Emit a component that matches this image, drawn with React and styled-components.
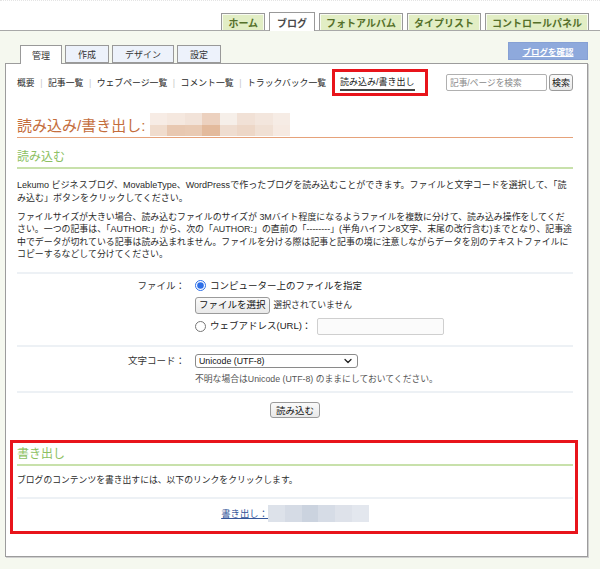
import React from 'react';
import styled, { createGlobalStyle } from 'styled-components';

const GlobalStyle = createGlobalStyle`
  html, body { margin: 0; padding: 0; background: #f5f8ef; }
  body { font-family: "Liberation Sans", "Noto Sans CJK JP", sans-serif; color: #333; }
  * { box-sizing: border-box; }
`;

const Page = styled.div`
  width: 600px;
  min-height: 569px;
  background: #f5f8ef;
`;

const TopBar = styled.div`
  height: 31px;
  background: #fff;
  border-top: 1px dotted #e4e4e4;
  border-bottom: 1px solid #a8a8a8;
  display: flex;
  justify-content: flex-end;
  align-items: flex-end;
  gap: 4px;
  padding-right: 11px;
`;

const TopTab = styled.div`
  height: ${p => (p.$active ? 19 : 17)}px;
  margin-bottom: ${p => (p.$active ? -1 : 0)}px;
  padding: 1px ${p => (p.$active ? 7 : 6)}px 0;
  display: flex;
  align-items: center;
  font-size: 10px;
  font-weight: bold;
  background: ${p => (p.$active ? '#fff' : '#e2eec5')};
  color: ${p => (p.$active ? '#4a4a4a' : '#55702a')};
  border: 1px solid #999;
  border-bottom: none;
  box-shadow: inset 1px 1px 0 rgba(255, 255, 255, 0.75), inset -1px 0 0 rgba(255, 255, 255, 0.75);
  white-space: nowrap;
`;

const Main = styled.div`
  padding: 0 12px 14px 5px;
`;

const SubBar = styled.div`
  height: 32px;
  display: flex;
  justify-content: space-between;
  align-items: flex-end;
  padding-left: 15px;
`;

const SubTabs = styled.div`
  display: flex;
  align-items: flex-end;
  gap: 3px;
`;

const SubTab = styled.div`
  position: relative;
  z-index: 1;
  height: ${p => (p.$active ? 19 : 18)}px;
  margin-bottom: ${p => (p.$active ? -1 : 0)}px;
  padding: 0 ${p => (p.$active ? 11 : 12)}px;
  display: flex;
  align-items: center;
  font-size: 9px;
  color: #333;
  background: ${p => (p.$active ? '#fff' : '#edf2fb')};
  border: 1px solid #999;
  border-bottom: ${p => (p.$active ? 'none' : '1px solid #999')};
  white-space: nowrap;
`;

const ViewBlogButton = styled.a`
  width: 80px;
  height: 18px;
  margin-bottom: 3px;
  display: flex;
  align-items: center;
  justify-content: center;
  background: #8ea9dc;
  border: 1px solid #86a0d4;
  color: #fff;
  font-size: 8.5px;
  font-weight: bold;
  text-decoration: underline;
`;

const Panel = styled.div`
  background: #fff;
  border: 1px solid #9c9c9c;
  box-shadow: 1px 1px 0 #cfcfcf;
  padding: 5px 14px 22px 11px;
`;

const NavRow = styled.div`
  display: flex;
  align-items: center;
  justify-content: space-between;
  height: 27px;
`;

const NavLinks = styled.div`
  display: flex;
  align-items: center;
  font-size: 8.85px;
  color: #2a2a2a;
`;

const NavLink = styled.span`
  white-space: nowrap;
`;

const NavSep = styled.span`
  color: #c8c8c8;
  margin: 0 5.5px;
`;

const ActiveNav = styled.span`
  margin-left: 6px;
  border: 3px solid #e8141b;
  padding: 3px 10px 2px 5px;
  display: flex;
  align-items: center;
  height: 27px;
`;

const ActiveNavText = styled.span`
  font-size: 9px;
  color: #222;
  line-height: 13px;
  border-bottom: 2px solid #444;
  white-space: nowrap;
`;

const SearchForm = styled.div`
  display: flex;
  align-items: center;
  gap: 2px;
`;

const SearchInput = styled.div`
  width: 101px;
  height: 17px;
  border: 1px solid #b0b0b0;
  border-radius: 2px;
  font-size: 8.7px;
  color: #8a8a8a;
  display: flex;
  align-items: center;
  padding-left: 3px;
  background: #fff;
`;

const Btn = styled.span`
  display: inline-flex;
  align-items: center;
  justify-content: center;
  height: ${p => p.$h || 17}px;
  padding: 0 ${p => p.$px || 3}px;
  border: 1px solid #9a9a9a;
  border-radius: 3px;
  background: linear-gradient(#fafafa, #e9e9e9);
  font-size: ${p => p.$fs || 9}px;
  color: #111;
  white-space: nowrap;
`;

const PageTitle = styled.h1`
  margin: 17px 0 0;
  display: flex;
  align-items: flex-end;
  border-bottom: 1.5px solid #e6a27a;
  font-size: 15px;
  font-weight: normal;
  color: #c46d3c;
  line-height: 20px;
  padding-bottom: 1px;
`;

const Mosaic = styled.span`
  display: inline-grid;
  grid-template-columns: repeat(${p => p.$cols}, ${p => p.$cw}px);
  grid-auto-rows: ${p => p.$ch}px;
  vertical-align: middle;
`;

const Cell = styled.span`
  background: ${p => p.$c};
`;

const SectionTitle = styled.h2`
  margin: ${p => p.$mt || 11}px 0 0;
  font-size: 12px;
  font-weight: normal;
  color: #8cbf62;
  line-height: 16px;
  padding-bottom: 2px;
  border-bottom: 2px solid #c8e1ab;
`;

const Para = styled.p`
  margin: ${p => p.$mt || 0}px 0 0;
  font-size: ${p => p.$fs || 9.02}px;
  line-height: 12.5px;
  color: #2a2a2a;
`;

const FormTable = styled.div`
  margin-top: 11px;
`;

const FormRow = styled.div`
  display: grid;
  grid-template-columns: 168px 1fr;
  column-gap: 10px;
  border-top: 2px solid #edf1f5;
  padding: ${p => p.$pad};
`;

const FormLabel = styled.div`
  text-align: right;
  font-size: 9.5px;
  line-height: 14px;
  color: #333;
`;

const FieldCol = styled.div`
  display: flex;
  flex-direction: column;
  align-items: flex-start;
  gap: ${p => p.$gap || 4}px;
`;

const Line = styled.div`
  display: flex;
  align-items: center;
  gap: 4px;
  font-size: 9.5px;
  line-height: 14px;
  color: #222;
`;

const Radio = styled.input.attrs({ type: 'radio' })`
  width: 11px;
  height: 11px;
  margin: 0;
  accent-color: #2d6fe8;
`;

const Muted = styled.span`
  font-size: 8.8px;
  color: #333;
`;

const UrlInput = styled.div`
  width: 127px;
  height: 17px;
  border: 1px solid #cfcfcf;
  border-radius: 2px;
  background: #fbfbfb;
  margin-left: 2px;
`;

const SelectBox = styled.div`
  width: 163px;
  height: 14px;
  border: 1px solid #8a8a8a;
  border-radius: 3px;
  background: #fff;
  display: flex;
  align-items: center;
  justify-content: space-between;
  padding: 0 5px 0 3px;
  font-size: 8.8px;
  color: #111;
`;

const Help = styled.div`
  font-size: 8.8px;
  line-height: 12px;
  color: #555;
`;

const CenterRow = styled.div`
  display: flex;
  justify-content: center;
  align-items: center;
  margin-top: ${p => p.$mt || 0}px;
  padding: ${p => p.$pad};
  border-top: ${p => (p.$line ? '2px solid #edf1f5' : 'none')};
`;

const ExportBox = styled.section`
  margin: 22px -5px 0 -7px;
  border: 3px solid #e8141b;
  padding: 0 2px 9px 4px;
`;

const ExportText = styled.p`
  margin: 8px 0 0;
  font-size: 8.8px;
  line-height: 12px;
  color: #2a2a2a;
`;

const ExportLink = styled.a`
  font-size: 9.4px;
  color: #35569a;
  text-decoration: underline;
  white-space: nowrap;
`;

const topTabs = ['ホーム', 'ブログ', 'フォトアルバム', 'タイプリスト', 'コントロールパネル'];
const subTabs = ['管理', '作成', 'デザイン', '設定'];
const navLinks = ['概要', '記事一覧', 'ウェブページ一覧', 'コメント一覧', 'トラックバック一覧'];

const titleMosaic = [
  '#f7ece5', '#f5e8df', '#f2e3d9', '#ecd1bf', '#f6efe9', '#f1e1d6', '#f3e6dd', '#f6ece5',
  '#f0dccd', '#e8c8b1', '#e9cab3', '#e3ba9c', '#efddd0', '#edd7c7', '#f0e0d4', '#f6eae2',
];
const exportMosaic = ['#dde2ea', '#d5dbe5', '#cbd3df', '#d6dce6', '#dee2ea', '#e3e7ee'];

export default function App() {
  return (
    <Page>
      <GlobalStyle />
      <TopBar>
        {topTabs.map(t => (
          <TopTab key={t} $active={t === 'ブログ'}>{t}</TopTab>
        ))}
      </TopBar>
      <Main>
        <SubBar>
          <SubTabs>
            {subTabs.map(t => (
              <SubTab key={t} $active={t === '管理'}>{t}</SubTab>
            ))}
          </SubTabs>
          <ViewBlogButton>ブログを確認</ViewBlogButton>
        </SubBar>
        <Panel>
          <NavRow>
            <NavLinks>
              {navLinks.map((l, i) => (
                <React.Fragment key={l}>
                  {i > 0 && <NavSep>|</NavSep>}
                  <NavLink>{l}</NavLink>
                </React.Fragment>
              ))}
              <ActiveNav>
                <ActiveNavText>読み込み/書き出し</ActiveNavText>
              </ActiveNav>
            </NavLinks>
            <SearchForm>
              <SearchInput>記事/ページを検索</SearchInput>
              <Btn $h={17} $px={2}>検索</Btn>
            </SearchForm>
          </NavRow>

          <PageTitle>
            読み込み/書き出し:&nbsp;
            <Mosaic $cols={8} $cw={17.6} $ch={11.5}>
              {titleMosaic.map((c, i) => <Cell key={i} $c={c} />)}
            </Mosaic>
          </PageTitle>

          <SectionTitle>読み込む</SectionTitle>
          <Para $mt={10}>
            Lekumo ビジネスブログ、MovableType、WordPressで作ったブログを読み込むことができます。ファイルと文字コードを選択して、「読み込む」ボタンをクリックしてください。
          </Para>
          <Para $mt={6.5} $fs={8.92}>
            ファイルサイズが大きい場合、読み込むファイルのサイズが 3Mバイト程度になるようファイルを複数に分けて、読み込み操作をしてください。一つの記事は、「AUTHOR:」から、次の「AUTHOR:」の直前の「--------」(半角ハイフン8文字、末尾の改行含む)までとなり、記事途中でデータが切れている記事は読み込まれません。ファイルを分ける際は記事と記事の境に注意しながらデータを別のテキストファイルにコピーするなどして分けてください。
          </Para>

          <FormTable>
            <FormRow $pad="5px 0 10px">
              <FormLabel>ファイル：</FormLabel>
              <FieldCol $gap={4}>
                <Line>
                  <Radio name="src" defaultChecked />
                  <span>コンピューター上のファイルを指定</span>
                </Line>
                <Line>
                  <Btn $h={17} $px={3} $fs={9.5}>ファイルを選択</Btn>
                  <Muted>選択されていません</Muted>
                </Line>
                <Line>
                  <Radio name="src" />
                  <span>ウェブアドレス(URL)：</span>
                  <UrlInput />
                </Line>
              </FieldCol>
            </FormRow>
            <FormRow $pad="7px 0 6px">
              <FormLabel>文字コード：</FormLabel>
              <FieldCol $gap={5}>
                <SelectBox>
                  <span>Unicode (UTF-8)</span>
                  <svg width="8" height="6" viewBox="0 0 8 6" fill="none">
                    <path d="M1 1.5 L4 4.5 L7 1.5" stroke="#222" strokeWidth="1.3" strokeLinecap="round" strokeLinejoin="round" />
                  </svg>
                </SelectBox>
                <Help>不明な場合はUnicode (UTF-8) のままにしておいてください。</Help>
              </FieldCol>
            </FormRow>
            <CenterRow $line $pad="9px 0 0">
              <Btn $h={16} $px={5} $fs={9.5}>読み込む</Btn>
            </CenterRow>
          </FormTable>

          <ExportBox>
            <SectionTitle $mt={3}>書き出し</SectionTitle>
            <ExportText>ブログのコンテンツを書き出すには、以下のリンクをクリックします。</ExportText>
            <CenterRow $line $mt={11} $pad="6px 0 0">
              <ExportLink>書き出し：</ExportLink>
              <Mosaic $cols={6} $cw={16.8} $ch={17}>
                {exportMosaic.map((c, i) => <Cell key={i} $c={c} />)}
              </Mosaic>
            </CenterRow>
          </ExportBox>
        </Panel>
      </Main>
    </Page>
  );
}
